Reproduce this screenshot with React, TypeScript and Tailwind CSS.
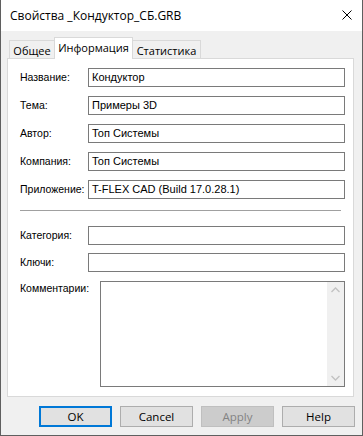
import React from "react";

const ui = "font-['Open_Sans','Noto_Sans',sans-serif]";
const ms = "font-['Liberation_Sans',Arial,sans-serif]";

function Field({ label, value, last }: { label: string; value: string; last?: boolean }) {
  return (
    <div className={`flex items-center h-[19px] ${last ? "" : "mb-[9px]"}`}>
      <div className="w-[68px] text-[10.5px] leading-[13px] text-black whitespace-nowrap">{label}</div>
      <div className="w-[257px] h-[19px] border border-[#7a7a7a] bg-white flex items-center pl-[3px] text-[11px] leading-[13px] text-black whitespace-nowrap">
        {value}
      </div>
    </div>
  );
}

function Btn({ label, kind }: { label: string; kind?: "default" | "disabled" }) {
  const cls =
    kind === "default"
      ? "border-2 border-[#0078d7] bg-[#e1e1e1] text-black"
      : kind === "disabled"
      ? "border border-[#bfbfbf] bg-[#cccccc] text-[#838383]"
      : "border border-[#adadad] bg-[#e1e1e1] text-black";
  return (
    <div className={`w-[73px] h-[21px] flex items-center justify-center text-[11.5px] leading-[16px] ${ui} ${cls}`}>
      {label}
    </div>
  );
}

export default function App() {
  return (
    <div className="w-[363px] h-[436px] bg-[#f0f0f0] border-l border-r border-b border-[#5f5f5f] flex flex-col overflow-hidden">
      {/* Title bar */}
      <div className="h-[31px] bg-white flex items-center justify-between pl-[9px] pr-[10px] shrink-0">
        <span className={`text-[12px] leading-[16px] text-black ${ui}`}>Свойства _Кондуктор_СБ.GRB</span>
        <svg width="10" height="10" viewBox="0 0 10 10" className="mt-[-2px]">
          <path d="M0.5 0.5 L9.5 9.5 M9.5 0.5 L0.5 9.5" stroke="#000" strokeWidth="1" fill="none" />
        </svg>
      </div>

      {/* Tabs */}
      <div className={`mt-[6px] pl-[8px] flex items-end h-[21px] shrink-0 ${ui} text-[11px] leading-[15px] text-black`}>
        <div className="w-[45px] h-[18px] border-l border-t border-[#d9d9d9] bg-[#f0f0f0] flex items-center justify-center pt-[1px]">
          Общее
        </div>
        <div className="relative z-10 w-[79px] h-[22px] -mb-px border-l border-t border-r border-[#d9d9d9] bg-white flex items-center justify-center pb-[2px]">
          Информация
        </div>
        <div className="w-[68px] h-[18px] border-t border-r border-[#d9d9d9] bg-[#f0f0f0] flex items-center justify-center pt-[1px]">
          Статистика
        </div>
      </div>

      {/* Panel */}
      <div className={`ml-[6px] w-[347px] h-[339px] border border-[#d9d9d9] bg-white shrink-0 pt-[9px] pl-[12px] ${ms}`}>
        <Field label="Название:" value="Кондуктор" />
        <Field label="Тема:" value="Примеры 3D" />
        <Field label="Автор:" value="Топ Системы" />
        <Field label="Компания:" value="Топ Системы" />
        <Field label="Приложение:" value="T-FLEX CAD (Build 17.0.28.1)" last />

        <div className="mt-[11px] w-[321px] h-px bg-[#a0a0a0]" />

        <div className="mt-[15px]">
          <Field label="Категория:" value="" />
        </div>
        <div className="-mt-px">
          <Field label="Ключи:" value="" />
        </div>
        <div className="flex items-start">
          <div className="w-[80px] mt-[1px] text-[10.5px] leading-[13px] text-black whitespace-nowrap">Комментарии:</div>
          <div className="w-[245px] h-[106px] border border-[#7a7a7a] bg-white flex justify-end">
            <div className="w-[17px] h-full bg-[#f0f0f0] flex flex-col items-center justify-between py-[5px]">
              <svg width="9" height="6" viewBox="0 0 9 6">
                <path d="M0.5 5 L4.5 1 L8.5 5" stroke="#c2c2c2" strokeWidth="1.3" fill="none" />
              </svg>
              <svg width="9" height="6" viewBox="0 0 9 6">
                <path d="M0.5 1 L4.5 5 L8.5 1" stroke="#c2c2c2" strokeWidth="1.3" fill="none" />
              </svg>
            </div>
          </div>
        </div>
      </div>

      {/* Buttons */}
      <div className="mt-[9px] pl-[38px] flex gap-[8px] shrink-0">
        <Btn label="OK" kind="default" />
        <Btn label="Cancel" />
        <Btn label="Apply" kind="disabled" />
        <Btn label="Help" />
      </div>
    </div>
  );
}
